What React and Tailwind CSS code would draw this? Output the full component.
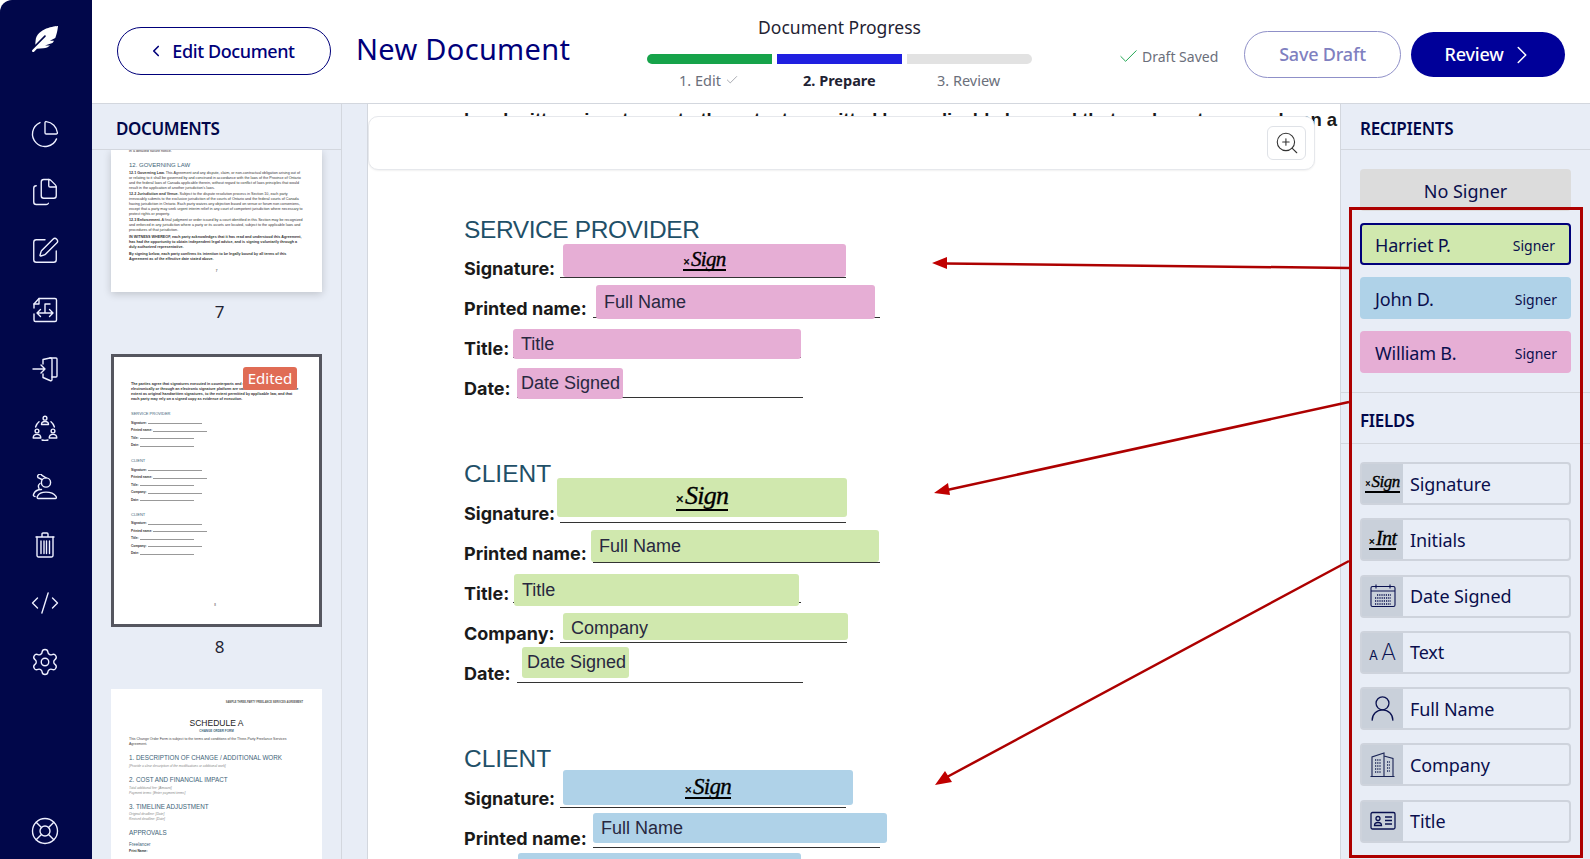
import React from "react";
import { ChartPie, Files, SquarePen, CodeXml, Settings, LifeBuoy, ChevronLeft, ChevronRight, ZoomIn, Check, UserRound } from "lucide-react";
import { FaFeatherAlt } from "react-icons/fa";

const ui = "font-['Noto_Sans',sans-serif]";
const doc = "font-['Inter','Liberation_Sans',sans-serif]";
const fieldFont = "font-['Liberation_Sans',Arial,sans-serif]";

function DocArrowIcon() {
  return (
    <svg width="26" height="26" viewBox="0 0 26 26" fill="none" stroke="currentColor" strokeWidth="1.4" strokeLinejoin="round" strokeLinecap="round">
      <path d="M2 11V7l5-5.5h16a1.5 1.5 0 0 1 1.5 1.5v20a1.5 1.5 0 0 1-1.5 1.5H3.5A1.5 1.5 0 0 1 2 23v-6" />
      <path d="M7 1.5V7H2" />
      <path d="M5 16h16M8.5 12.5 5 16l3.5 3.5M17.5 12.5 21 16l-3.5 3.5M13 16V7h5" />
    </svg>
  );
}

function DoorIcon() {
  return (
    <svg width="26" height="26" viewBox="0 0 26 26" fill="none" stroke="currentColor" strokeWidth="1.4" strokeLinejoin="round" strokeLinecap="round">
      <path d="M1 13h12M9 9l4 4-4 4" />
      <path d="M11 8V3.5L18 2h6a1 1 0 0 1 1 1v17a1 1 0 0 1-1 1h-4" />
      <path d="M11 18v3.5l7 3a1.2 1.2 0 0 0 2-1V3.5A1.5 1.5 0 0 0 18 2" />
    </svg>
  );
}

function CircleUsersIcon() {
  return (
    <svg width="26" height="26" viewBox="0 0 26 26" fill="none" stroke="currentColor" strokeWidth="1.4" strokeLinejoin="round" strokeLinecap="round">
      <circle cx="13" cy="3.2" r="1.9" />
      <path d="M9.5 9.5c0-2 1.4-3 3.5-3s3.5 1 3.5 3z" />
      <circle cx="5" cy="16" r="1.9" />
      <path d="M1.2 23c0-2.3 1.5-3.6 3.8-3.6s3.8 1.3 3.8 3.6z" />
      <circle cx="21" cy="16" r="1.9" />
      <path d="M17.2 23c0-2.3 1.5-3.6 3.8-3.6s3.8 1.3 3.8 3.6z" />
      <path d="M7 6.8A10 10 0 0 0 3.6 12M19 6.8a10 10 0 0 1 3.4 5.2M10 25a10 10 0 0 0 6 0" />
    </svg>
  );
}

function UsersStackIcon() {
  return (
    <svg width="26" height="26" viewBox="0 0 26 26" fill="none" stroke="currentColor" strokeWidth="1.4" strokeLinejoin="round" strokeLinecap="round">
      <circle cx="14" cy="8.5" r="4.6" />
      <path d="M10 5.500 6 3.600A2 2 0 0 1 10 1.400l4 2.400" />
      <path d="M6 24.500c-1 0-1-1.400-.5-2.400 1.200-2.600 4-4 8.500-4s8 1.400 10 4.200c.7 1 .4 2.200-.6 2.200z" />
      <path d="M9.500 15.500c-3.500 0-7 2-8 5-.4 1.200.2 2 1.500 2" />
      <path d="M8 9.500c-1.500 1-2 3-1 5" />
    </svg>
  );
}

function TrashIcon() {
  return (
    <svg width="24" height="26" viewBox="0 0 24 26" fill="none" stroke="currentColor" strokeWidth="1.4" strokeLinejoin="round" strokeLinecap="round">
      <path d="M3 5h18M9 4.500V2a1 1 0 0 1 1-1h4a1 1 0 0 1 1 1v2.500" />
      <path d="M4 5v18.500A1.500 1.500 0 0 0 5.500 25h13a1.500 1.500 0 0 0 1.500-1.500V5" />
      <path d="M8 9v12.500M11 9v12.500M13.500 9v12.500M16.500 9v12.500" />
    </svg>
  );
}

function CalendarIcon() {
  return (
    <svg width="26" height="26" viewBox="0 0 26 26" fill="none" stroke="#0a1150" strokeWidth="1.1">
      <rect x="1" y="3.500" width="24" height="20" rx="1.500" />
      <path d="M1 8h24M6 1.500v4M20 1.500v4" />
      <path d="M7 12h14M5 15h16M5 18h16M5 21h16" strokeWidth="1.500" strokeDasharray="1.200 1" />
    </svg>
  );
}

function BuildingIcon() {
  return (
    <svg width="26" height="26" viewBox="0 0 26 26" fill="none" stroke="#1a2455" strokeWidth="1.100">
      <path d="M2 24.500V5L14 1v23.500M14 4l9 2.500v18M0.500 24.500h24" />
      <path d="M5 8h6M5 11h6M5 14h6M5 17h6M5 20h6M17 10h3M17 13h3M17 16h3M17 19h3" strokeWidth="1.400" strokeDasharray="1.200 1" />
    </svg>
  );
}

function TitleCardIcon() {
  return (
    <svg width="26" height="20" viewBox="0 0 26 20" fill="none" stroke="#0a1150" strokeWidth="1.300">
      <rect x="1" y="1.500" width="24" height="16.500" rx="1.500" />
      <circle cx="8" cy="7.500" r="2" />
      <path d="M4.500 14.500c0-2 1.500-3 3.500-3s3.500 1 3.500 3z" />
      <path d="M15 6h7M15 9.500h7M15 13h7" />
    </svg>
  );
}

function XSign({ word = "Sign", size = "text-[22px]" }) {
  return (
    <span className={"inline-flex items-baseline border-b-2 border-black leading-[0.95] text-black font-['Liberation_Serif',serif] italic [-webkit-text-stroke:0.35px_black] " + size}>
      <span className="mr-[1px] text-[0.55em] not-italic font-bold">×</span>
      <span className="tracking-[-0.03em]">{word}</span>
    </span>
  );
}

function Field({ className, label, sign, signSize, tone, pad = "pl-2" }) {
  return (
    <div className={"absolute flex items-center rounded-[3px] " + tone + " " + className}>
      {sign ? (
        <div className="flex w-full justify-center"><XSign size={signSize} /></div>
      ) : (
        <span className={"whitespace-nowrap text-[18px] text-[#28283f] " + pad + " " + fieldFont}>{label}</span>
      )}
    </div>
  );
}

function Row({ label, labelW, lineW, children }) {
  return (
    <div className="relative flex h-[40px] items-start">
      <div className={"text-[18px] font-bold leading-[40px] text-[#1a1a1a] whitespace-nowrap " + labelW}>{label}</div>
      <div className={"h-[29px] border-b border-[#333] " + lineW} />
      {children}
    </div>
  );
}

function Thumb7() {
  return (
    <div className="h-[142px] overflow-hidden bg-white px-[18px] text-[3.700px] leading-[5px] text-[#333] shadow-[0_2px_8px_rgba(0,0,0,0.18)] font-['Liberation_Sans',sans-serif]">
      <p className="mt-[-1px]">in a detailed failure notice.</p>
      <p className="mt-[7px] text-[6px] leading-[8px] text-[#3e6478]">12. GOVERNING LAW</p>
      <p className="mt-[1.500px]"><b>12.1 Governing Law.</b> This Agreement and any dispute, claim, or non-contractual obligation arising out of or relating to it shall be governed by and construed in accordance with the laws of the Province of Ontario and the federal laws of Canada applicable therein, without regard to conflict of laws principles that would result in the application of another jurisdiction's laws.</p>
      <p className="mt-[1px]"><b>12.2 Jurisdiction and Venue.</b> Subject to the dispute resolution process in Section 10, each party irrevocably submits to the exclusive jurisdiction of the courts of Ontario and the federal courts of Canada having jurisdiction in Ontario. Each party waives any objection based on venue or forum non conveniens, except that a party may seek urgent interim relief in any court of competent jurisdiction where necessary to protect rights or property.</p>
      <p className="mt-[1px]"><b>12.3 Enforcement.</b> A final judgment or order issued by a court identified in this Section may be recognized and enforced in any jurisdiction where a party or its assets are located, subject to the applicable laws and procedures of that jurisdiction.</p>
      <p className="mt-[2px] font-bold">IN WITNESS WHEREOF, each party acknowledges that it has read and understood this Agreement, has had the opportunity to obtain independent legal advice, and is signing voluntarily through a duly authorized representative.</p>
      <p className="mt-[2px] font-bold">By signing below, each party confirms its intention to be legally bound by all terms of this Agreement as of the effective date stated above.</p>
      <p className="mt-[7px] text-center">7</p>
    </div>
  );
}

function ThumbRow({ label, w }) {
  return (
    <div className="flex h-[7.500px] items-end text-[3.200px] font-bold leading-[4px] text-[#333]">
      <span>{label}</span>
      <span className={"ml-[1px] mb-[0.500px] border-b border-[#999] " + w} />
    </div>
  );
}

function Thumb8() {
  return (
    <div className="relative h-[273px] border-[3px] border-[#55565f] bg-white pl-[17px] pr-[20px] pt-[25px] font-['Liberation_Sans',sans-serif]">
      <p className="text-[3.700px] font-bold leading-[5px] text-[#333]">The parties agree that signatures executed in counterparts and signatures delivered electronically or through an electronic signature platform are valid and enforceable to the same extent as original handwritten signatures, to the extent permitted by applicable law, and that each party may rely on a signed copy as evidence of execution.</p>
      <p className="mt-[9px] text-[4px] leading-[6px] text-[#3e6478]">SERVICE PROVIDER</p>
      <ThumbRow label="Signature:" w="w-[54px]" />
      <ThumbRow label="Printed name:" w="w-[54px]" />
      <ThumbRow label="Title:" w="w-[54px]" />
      <ThumbRow label="Date:" w="w-[54px]" />
      <p className="mt-[11px] text-[4px] leading-[6px] text-[#3e6478]">CLIENT</p>
      <ThumbRow label="Signature:" w="w-[54px]" />
      <ThumbRow label="Printed name:" w="w-[54px]" />
      <ThumbRow label="Title:" w="w-[54px]" />
      <ThumbRow label="Company:" w="w-[54px]" />
      <ThumbRow label="Date:" w="w-[54px]" />
      <p className="mt-[10px] text-[4px] leading-[6px] text-[#3e6478]">CLIENT</p>
      <ThumbRow label="Signature:" w="w-[54px]" />
      <ThumbRow label="Printed name:" w="w-[54px]" />
      <ThumbRow label="Title:" w="w-[54px]" />
      <ThumbRow label="Company:" w="w-[54px]" />
      <ThumbRow label="Date:" w="w-[54px]" />
      <p className="mt-[48px] text-center text-[3px] leading-[4px] text-[#333]">8</p>
      <div className={"absolute left-[129px] top-[10px] flex h-[23px] w-[54px] items-center justify-center rounded-[3px] bg-[#e06c55] text-[15px] text-white " + ui}>Edited</div>
    </div>
  );
}

function Thumb9() {
  return (
    <div className="h-[170px] overflow-hidden bg-white px-[18px] pt-[12px] font-['Liberation_Sans',sans-serif]">
      <p className="text-right text-[2.600px] font-bold leading-[4px] pr-[1px] text-[#555]">SAMPLE THREE-PARTY FREELANCE SERVICES AGREEMENT</p>
      <p className="mt-[12px] text-center text-[8.500px] leading-[12px] text-[#222]">SCHEDULE A</p>
      <p className="text-center text-[3px] font-bold leading-[5px] text-[#3e6478]">CHANGE ORDER FORM</p>
      <p className="mt-[3px] text-[3.500px] leading-[5px] text-[#444]">This Change Order Form is subject to the terms and conditions of the Three-Party Freelance Services Agreement.</p>
      <p className="mt-[6px] text-[6.300px] leading-[9px] text-[#3e6478] whitespace-nowrap">1. DESCRIPTION OF CHANGE / ADDITIONAL WORK</p>
      <p className="mt-[2px] text-[3.300px] italic leading-[5px] text-[#888]">[Provide a clear description of the modifications or additional work]</p>
      <p className="mt-[6px] text-[6.300px] leading-[9px] text-[#3e6478]">2. COST AND FINANCIAL IMPACT</p>
      <p className="mt-[2px] text-[3.300px] italic leading-[5px] text-[#888]">Total additional fee: [Amount]</p>
      <p className="text-[3.300px] italic leading-[5px] text-[#888]">Payment terms: [Enter payment terms]</p>
      <p className="mt-[6px] text-[6.300px] leading-[9px] text-[#3e6478]">3. TIMELINE ADJUSTMENT</p>
      <p className="mt-[1px] text-[3.300px] italic leading-[5px] text-[#888]">Original deadline: [Date]</p>
      <p className="text-[3.300px] italic leading-[5px] text-[#888]">Revised deadline: [Date]</p>
      <p className="mt-[6px] text-[6.300px] leading-[9px] text-[#3e6478]">APPROVALS</p>
      <p className="mt-[4px] text-[4.500px] leading-[7px] text-[#3e6478]">Freelancer</p>
      <p className="mt-[1px] text-[3.300px] font-bold leading-[5px] text-[#333]">Print Name:</p>
    </div>
  );
}

function Recipient({ name, tone, active }) {
  return (
    <div className={"flex h-[42px] items-center justify-between rounded-[4px] pr-[14px] pt-[2px] text-[#0a0f4d] " + tone + (active ? " border-2 border-[#00007a] pl-[13px]" : " pl-[15px]")}>
      <span className="text-[18px] tracking-[-0.2px]">{name}</span>
      <span className="text-[14px]">Signer</span>
    </div>
  );
}

function FieldItem({ icon, label }) {
  return (
    <div className="flex h-[43px] rounded-[4px] border-2 border-[#ced3dc] bg-[#e8edf6]">
      <div className="flex w-[41px] items-center justify-center bg-[#c9d0da]">{icon}</div>
      <div className="flex items-center pl-[7px] pt-[1px] text-[18px] tracking-[-0.1px] text-[#0a0f4d]">{label}</div>
    </div>
  );
}

export default function App() {
  return (
    <div className={"relative flex h-[859px] w-[1590px] overflow-hidden rounded-t-[12px] bg-white " + ui}>
      <aside className="flex w-[92px] shrink-0 flex-col items-center bg-[#01074a] pr-[2px] pt-[26px] text-[#eef0ff]">
        <FaFeatherAlt size={26} className="text-white" />
        <div className="mt-[69px] flex h-[26px] items-center"><ChartPie size={30} strokeWidth={1.1} /></div>
        <div className="mt-[32px] flex h-[26px] items-center"><Files size={30} strokeWidth={1.1} /></div>
        <div className="mt-[33px] flex h-[26px] items-center"><SquarePen size={30} strokeWidth={1.1} /></div>
        <div className="mt-[33px] flex h-[26px] items-center"><DocArrowIcon /></div>
        <div className="mt-[33px] flex h-[26px] items-center"><DoorIcon /></div>
        <div className="mt-[33px] flex h-[26px] items-center"><CircleUsersIcon /></div>
        <div className="mt-[33px] flex h-[26px] items-center"><UsersStackIcon /></div>
        <div className="mt-[32px] flex h-[26px] items-center"><TrashIcon /></div>
        <div className="mt-[32px] flex h-[26px] items-center"><CodeXml size={30} strokeWidth={1.1} /></div>
        <div className="mt-[33px] flex h-[26px] items-center"><Settings size={30} strokeWidth={1.1} /></div>
        <div className="mt-[143px] flex h-[26px] items-center"><LifeBuoy size={30} strokeWidth={1.1} /></div>
      </aside>

      <div className="flex min-w-0 flex-1 flex-col">
        <header className="flex h-[104px] shrink-0 items-start border-b border-[#d3d7de] pl-[25px]">
          <button className="mt-[27px] flex h-[48px] w-[214px] items-center justify-center gap-[7px] rounded-full border border-[#00007a] pr-[6px] text-[18px] font-medium tracking-[-0.4px] text-[#00007a]">
            <ChevronLeft size={18} strokeWidth={2.2} />
            Edit Document
          </button>
          <h1 className="ml-[25px] mt-[29px] w-[291px] text-[29px] leading-[40px] tracking-[0.3px] text-[#00007a]">New Document</h1>
          <div className="w-[385px] pt-[15px]">
            <div className="text-center text-[17.500px] leading-[24px] text-[#1f2333]">Document Progress</div>
            <div className="mt-[15px] flex h-[10px] gap-[5px]">
              <div className="flex-1 rounded-l-full bg-[#16a34a]" />
              <div className="flex-1 bg-[#1f1fe0]" />
              <div className="flex-1 rounded-r-full bg-[#e2e2e2]" />
            </div>
            <div className="relative mt-[6px] h-[20px] text-[14.500px] leading-[20px] text-[#6b6f7b]">
              <span className="absolute left-[32px] flex items-center gap-[4px]">1. Edit <Check size={14} strokeWidth={1} /></span>
              <span className="absolute left-[156px] font-bold text-[#1f2333]">2. Prepare</span>
              <span className="absolute left-[290px]">3. Review</span>
            </div>
          </div>
          <div className="ml-[85px] mt-[45px] flex w-[127px] items-center text-[14px] leading-[22px] text-[#6b6f7b]">
            <Check size={23} strokeWidth={1} className="mr-[2px] text-[#16a34a]" />
            Draft Saved
          </div>
          <button className="mt-[31px] h-[47px] w-[157px] rounded-full border border-[#8f90c8] text-[18px] font-medium tracking-[-0.2px] text-[#7f80c0]">Save Draft</button>
          <button className="ml-[10px] mt-[32px] flex h-[45px] w-[154px] items-center justify-center gap-[3px] rounded-full bg-[#000099] pl-[5px] text-[18px] font-medium tracking-[-0.2px] text-white">
            Review
            <ChevronRight size={30} strokeWidth={1.2} />
          </button>
        </header>

        <div className="flex min-h-0 flex-1">
          <section className="flex w-[250px] shrink-0 flex-col border-r border-[#d3d7de] bg-[#e8edf6]">
            <div className="flex h-[46px] shrink-0 items-center border-b border-[#d3d7de] pl-[24px] pt-[5px] text-[17px] font-semibold tracking-[-0.4px] text-[#01074a]">DOCUMENTS</div>
            <div className="min-h-0 flex-1 overflow-hidden pl-[19px] pr-[19px]">
              <Thumb7 />
              <div className="h-[62px] pt-[9px] pl-[6px] text-center text-[17px] leading-[22px] text-[#1f2333]">7</div>
              <Thumb8 />
              <div className="h-[62px] pt-[9px] pl-[6px] text-center text-[17px] leading-[22px] text-[#1f2333]">8</div>
              <Thumb9 />
            </div>
          </section>

          <div className="w-[26px] shrink-0 border-r border-[#d3d7de] bg-[#e8edf6]" />

          <main className={"relative min-w-0 flex-1 overflow-hidden bg-white pl-[96px] pt-[4px] " + doc}>
            <div className={"h-[24px] whitespace-nowrap text-[18.500px] font-bold leading-[24px] text-[#1a1a1a] " + fieldFont}>handwritten signatures, to the extent permitted by applicable law, and that each party may rely on a</div>

            <h2 className={"mt-[77px] h-[40px] pt-[1px] text-[24.500px] leading-[40px] tracking-[-0.4px] text-[#1f5068] " + fieldFont}>SERVICE PROVIDER</h2>
            <Row label="Signature:" labelW="w-[96px]" lineW="w-[286px]">
              <Field tone="bg-[#e6aed5]" sign signSize="text-[21px]" className="left-[99px] top-[-5px] h-[33px] w-[283px]" />
            </Row>
            <Row label="Printed name:" labelW="w-[129px]" lineW="w-[287px]">
              <Field tone="bg-[#e6aed5]" label="Full Name" className="left-[132px] top-[-4px] h-[34px] w-[279px]" />
            </Row>
            <Row label="Title:" labelW="w-[49px]" lineW="w-[288px]">
              <Field tone="bg-[#e6aed5]" label="Title" className="left-[49px] top-0 h-[30px] w-[288px]" />
            </Row>
            <Row label="Date:" labelW="w-[53px]" lineW="w-[286px]">
              <Field tone="bg-[#e6aed5]" label="Date Signed" pad="pl-[4px]" className="left-[53px] top-[-1px] h-[31px] w-[106px]" />
            </Row>

            <h2 className={"mt-[45px] h-[40px] text-[24.500px] leading-[40px] text-[#1f5068] " + fieldFont}>CLIENT</h2>
            <Row label="Signature:" labelW="w-[96px]" lineW="w-[286px]">
              <Field tone="bg-[#d0e8ae]" sign signSize="text-[26px]" className="left-[93px] top-[-16px] h-[39px] w-[290px]" />
            </Row>
            <Row label="Printed name:" labelW="w-[129px]" lineW="w-[287px]">
              <Field tone="bg-[#d0e8ae]" label="Full Name" className="left-[127px] top-[-4px] h-[32px] w-[288px]" />
            </Row>
            <Row label="Title:" labelW="w-[49px]" lineW="w-[288px]">
              <Field tone="bg-[#d0e8ae]" label="Title" className="left-[50px] top-0 h-[32px] w-[285px]" />
            </Row>
            <Row label="Company:" labelW="w-[96px]" lineW="w-[287px]">
              <Field tone="bg-[#d0e8ae]" label="Company" pad="pl-2 pt-[3px]" className="left-[99px] top-[-1px] h-[27px] w-[285px]" />
            </Row>
            <Row label="Date:" labelW="w-[53px]" lineW="w-[286px]">
              <Field tone="bg-[#d0e8ae]" label="Date Signed" pad="pl-[5px]" className="left-[58px] top-[-7px] h-[31px] w-[107px]" />
            </Row>

            <h2 className={"mt-[45px] h-[40px] text-[24.500px] leading-[40px] text-[#1f5068] " + fieldFont}>CLIENT</h2>
            <Row label="Signature:" labelW="w-[96px]" lineW="w-[286px]">
              <Field tone="bg-[#afd2e8]" sign signSize="text-[23px]" className="left-[99px] top-[-9px] h-[35px] w-[290px]" />
            </Row>
            <Row label="Printed name:" labelW="w-[129px]" lineW="w-[287px]">
              <Field tone="bg-[#afd2e8]" label="Full Name" className="left-[129px] top-[-6px] h-[30px] w-[294px]" />
            </Row>
            <Row label="Title:" labelW="w-[49px]" lineW="w-[288px]">
              <Field tone="bg-[#afd2e8]" label="Title" className="left-[54px] top-[-6px] h-[32px] w-[283px]" />
            </Row>

            <div className="absolute left-0 top-[12px] flex h-[54px] w-[947px] items-center justify-end rounded-[10px] border border-[#e6e8ec] bg-white pr-[8px] shadow-[0_1px_2px_rgba(0,0,0,0.06)]">
              <div className="flex h-[34px] w-[39px] items-center justify-center rounded-[6px] border border-[#dfe2e7] text-[#333]">
                <ZoomIn size={26} strokeWidth={1} />
              </div>
            </div>
          </main>

          <section className="w-[250px] shrink-0 border-l border-[#d3d7de] bg-[#e8edf6]">
            <div className="flex h-[46px] items-center border-b border-[#d3d7de] pl-[19px] pt-[5px] text-[17px] font-semibold tracking-[-0.3px] text-[#01074a]">RECIPIENTS</div>
            <div className="flex h-[243px] flex-col gap-[12px] border-b border-[#d3d7de] pl-[19px] pr-[19px] pt-[19px]">
              <div className="flex h-[42px] items-center justify-center rounded-[4px] bg-[#dcdcdc] pt-[2px] text-[18px] text-[#0a0f4d]">No Signer</div>
              <Recipient name="Harriet P." tone="bg-[#d0e8ae]" active />
              <Recipient name="John D." tone="bg-[#afd2e8]" />
              <Recipient name="William B." tone="bg-[#e6aed5]" />
            </div>
            <div className="flex h-[51px] items-center border-b border-[#d3d7de] pl-[19px] pt-[5px] text-[17px] font-semibold tracking-[-0.3px] text-[#01074a]">FIELDS</div>
            <div className="flex flex-col gap-[13.300px] pl-[19px] pr-[19px] pt-[18px]">
              <FieldItem label="Signature" icon={<XSign size="text-[17px]" />} />
              <FieldItem label="Initials" icon={<XSign word="Int" size="text-[20px]" />} />
              <FieldItem label="Date Signed" icon={<CalendarIcon />} />
              <FieldItem
                label="Text"
                icon={
                  <span className="flex items-baseline gap-[3px] font-['Inter',sans-serif] text-[#0a1150]">
                    <span className="text-[13px] leading-none">A</span>
                    <span className="text-[23px] font-extralight leading-none">A</span>
                  </span>
                }
              />
              <FieldItem label="Full Name" icon={<UserRound size={31} strokeWidth={1} className="text-[#0a1150]" />} />
              <FieldItem label="Company" icon={<BuildingIcon />} />
              <FieldItem label="Title" icon={<TitleCardIcon />} />
            </div>
          </section>
        </div>
      </div>

      <svg className="pointer-events-none absolute left-0 top-0" width="1590" height="859" fill="none">
        <rect x="1350.5" y="208.5" width="231" height="648" stroke="#ad0000" strokeWidth="3" />
        <path d="M1349 268 945 263.500M1349 402 947 490M1349 561 947 777" stroke="#ad0000" strokeWidth="2.500" />
        <path d="M932 263 947 257v12zM934 493l14-10 2 12zM935 785l10-14 7 11z" fill="#c00000" />
      </svg>
    </div>
  );
}
